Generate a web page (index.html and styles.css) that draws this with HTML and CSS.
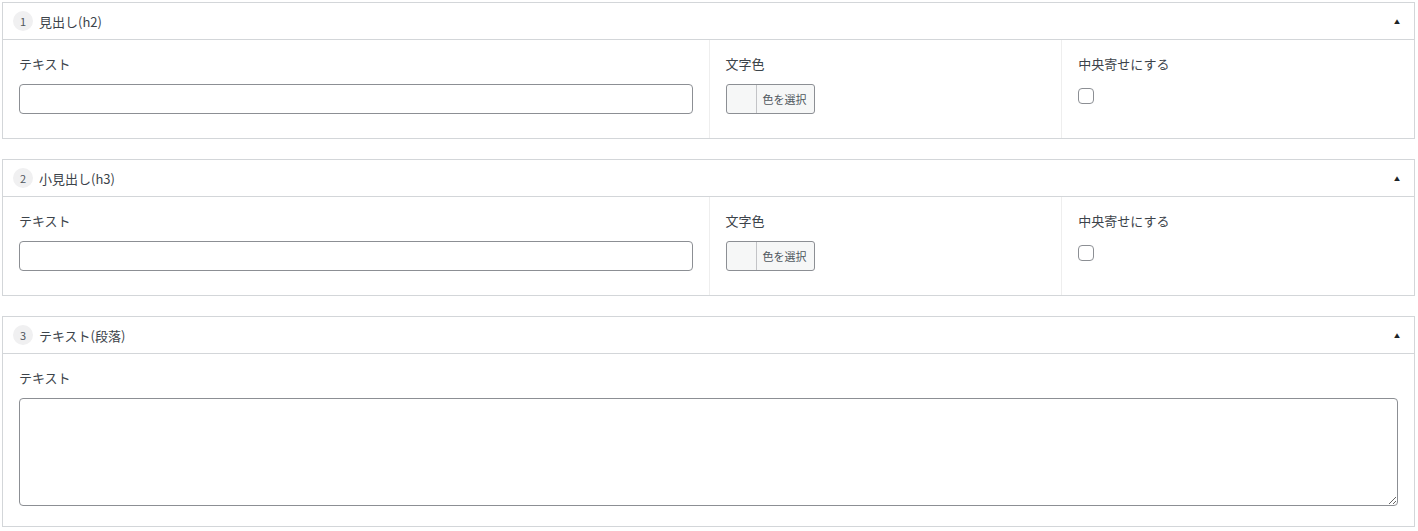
FILE: index.html
```html
<!DOCTYPE html>
<html lang="ja">
<head>
<meta charset="utf-8">
<link rel="stylesheet" href="styles.css">
</head>
<body>
<div class="list">
  <section class="panel">
    <div class="head">
      <span class="num">1</span>
      <span class="title">見出し(h2)</span>
      <span class="toggle">▲</span>
    </div>
    <div class="fields">
      <div class="field half">
        <label class="lbl">テキスト</label>
        <input class="text" type="text">
      </div>
      <div class="field quarter">
        <label class="lbl">文字色</label>
        <button class="color"><span class="swatch"></span><span class="ctext">色を選択</span></button>
      </div>
      <div class="field quarter">
        <label class="lbl">中央寄せにする</label>
        <span class="check"></span>
      </div>
    </div>
  </section>
  <section class="panel">
    <div class="head">
      <span class="num">2</span>
      <span class="title">小見出し(h3)</span>
      <span class="toggle">▲</span>
    </div>
    <div class="fields">
      <div class="field half">
        <label class="lbl">テキスト</label>
        <input class="text" type="text">
      </div>
      <div class="field quarter">
        <label class="lbl">文字色</label>
        <button class="color"><span class="swatch"></span><span class="ctext">色を選択</span></button>
      </div>
      <div class="field quarter">
        <label class="lbl">中央寄せにする</label>
        <span class="check"></span>
      </div>
    </div>
  </section>
  <section class="panel">
    <div class="head">
      <span class="num">3</span>
      <span class="title">テキスト(段落)</span>
      <span class="toggle">▲</span>
    </div>
    <div class="fields">
      <div class="field full">
        <label class="lbl">テキスト</label>
        <textarea class="area"></textarea>
      </div>
    </div>
  </section>
</div>
</body>
</html>
```
FILE: styles.css
```css
* { box-sizing: border-box; }
body {
  margin: 0;
  background: #fff;
  font-family: "Noto Sans CJK JP", "Noto Sans", sans-serif;
  font-size: 13px;
  color: #3c434a;
}
.list {
  display: flex;
  flex-direction: column;
  gap: 20px;
  padding: 2px 3px 0 2px;
}
.panel {
  border: 1px solid #d3d6d9;
  background: #fff;
}
.head {
  height: 37px;
  display: flex;
  align-items: center;
  padding: 0 14px 0 10px;
  border-bottom: 1px solid #d3d6d9;
}
.num {
  width: 20px;
  height: 20px;
  border-radius: 50%;
  background: #f0f0f1;
  display: flex;
  align-items: center;
  justify-content: center;
  font-size: 11px;
  color: #50575e;
  margin-right: 6px;
}
.title {
  flex: 1;
  font-size: 13px;
  color: #3c434a;
}
.toggle {
  font-size: 6px;
  color: #1d2327;
}
.fields {
  display: flex;
}
.field {
  padding: 14px 16px 24px;
}
.half { width: calc(50% + 1px); border-right: 1px solid #eeeeee; }
.quarter { flex: 1; }
.quarter + .quarter { border-left: 1px solid #eeeeee; }
.full { width: 100%; padding-bottom: 20px; }
.lbl {
  display: block;
  line-height: 20px;
  margin-bottom: 10px;
  font-size: 13px;
  color: #3c434a;
}
.text {
  display: block;
  width: 100%;
  height: 30px;
  border: 1px solid #8c8f94;
  border-radius: 4px;
  background: #fff;
  margin: 0;
}
.area {
  display: block;
  width: 100%;
  height: 108px;
  border: 1px solid #8c8f94;
  border-radius: 4px;
  margin: 0;
  resize: vertical;
}
.color {
  display: flex;
  align-items: stretch;
  height: 30px;
  padding: 0;
  margin: 0;
  border: 1px solid #8c8f94;
  border-radius: 3px;
  background: #f6f7f7;
  font-family: inherit;
  cursor: pointer;
}
.swatch {
  width: 30px;
  border-right: 1px solid #c3c4c7;
}
.ctext {
  display: flex;
  align-items: center;
  padding: 0 7px 0 6px;
  font-size: 11px;
  color: #50575e;
}
.check {
  display: block;
  width: 16px;
  height: 16px;
  margin-top: 14px;
  border: 1px solid #8c8f94;
  border-radius: 4px;
  background: #fff;
}
```
